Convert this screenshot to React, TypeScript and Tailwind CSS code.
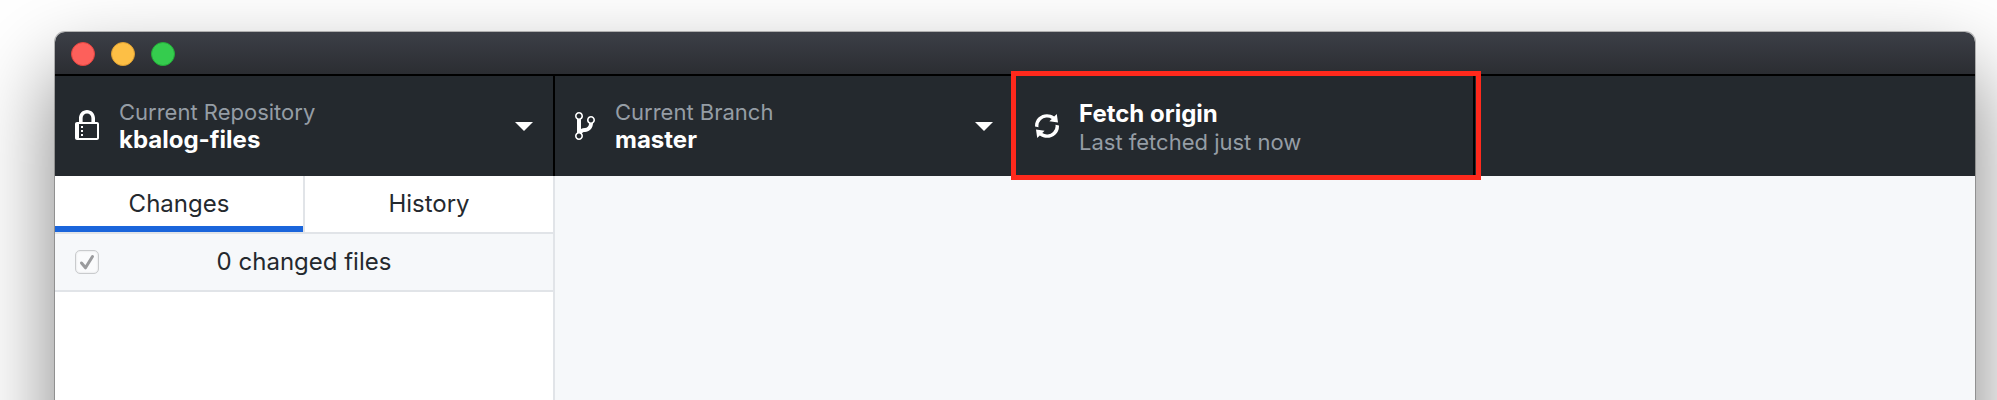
import type { ReactNode } from 'react';

type IconProps = { path: string; width: number };

const lockPath =
  'M4 13H3v-1h1v1zm8-6v7c0 .55-.45 1-1 1H1c-.55 0-1-.45-1-1V7c0-.55.45-1 1-1h1V4c0-2.2 1.8-4 4-4s4 1.8 4 4v2h1c.55 0 1 .45 1 1zM3.8 6h4.41V4c0-1.22-.98-2.2-2.2-2.2-1.22 0-2.2.98-2.2 2.2v2H3.8zM11 7H2v7h9V7zM4 8H3v1h1V8zm0 2H3v1h1v-1z';
const branchPath =
  'M10 5c0-1.11-.89-2-2-2a1.993 1.993 0 0 0-1 3.72v.3c-.02.52-.23.98-.63 1.38-.4.4-.86.61-1.38.63-.83.02-1.48.16-2 .45V4.72a1.993 1.993 0 0 0-1-3.72C.88 1 0 1.89 0 3a2 2 0 0 0 1 1.72v6.56c-.59.35-1 .99-1 1.72 0 1.11.89 2 2 2 1.11 0 2-.89 2-2 0-.53-.2-1-.53-1.36.09-.06.48-.41.59-.47.25-.11.56-.17.94-.17 1.05-.05 1.95-.45 2.75-1.25S8.95 7.77 9 6.73h-.02C9.59 6.37 10 5.73 10 5zM2 1.8c.66 0 1.2.55 1.2 1.2 0 .65-.55 1.2-1.2 1.2C1.35 4.2.8 3.65.8 3c0-.65.55-1.2 1.2-1.2zm0 12.41c-.66 0-1.2-.55-1.2-1.2 0-.65.55-1.2 1.2-1.2.65 0 1.2.55 1.2 1.2 0 .65-.55 1.2-1.2 1.2zm6-8c-.66 0-1.2-.55-1.2-1.2 0-.65.55-1.2 1.2-1.2.65 0 1.2.55 1.2 1.2 0 .65-.55 1.2-1.2 1.2z';
const syncPath =
  'M10.24 7.4a4.15 4.15 0 0 1-1.2 3.6 4.346 4.346 0 0 1-5.41.54L4.8 10.4.5 9.8l.6 4.2 1.31-1.26c2.36 1.74 5.7 1.57 7.84-.54a5.876 5.876 0 0 0 1.74-4.46l-1.75-.34zM2.96 5a4.346 4.346 0 0 1 5.41-.54L7.2 5.6l4.3.6-.6-4.2-1.31 1.26c-2.36-1.74-5.7-1.57-7.85.54C.5 5.03-.06 6.65.01 8.26l1.75.35A4.17 4.17 0 0 1 2.96 5z';

function Icon({ path, width }: IconProps) {
  return (
    <svg
      width={width * 2}
      height={32}
      viewBox={`0 0 ${width} 16`}
      fill="currentColor"
      fillRule="evenodd"
      className="shrink-0"
      aria-hidden="true"
    >
      <path d={path} />
    </svg>
  );
}

function Caret() {
  return (
    <svg width="18" height="9" viewBox="0 0 18 9" fill="currentColor" className="shrink-0" aria-hidden="true">
      <path d="M0 0h18L9 9z" />
    </svg>
  );
}

function ToolbarButton({ icon, caret, children }: { icon: ReactNode; caret?: boolean; children: ReactNode }) {
  return (
    <button
      type="button"
      className="flex h-full w-full items-center gap-5 border-r-2 border-black px-5 text-left text-white"
    >
      {icon}
      <span className="flex min-w-0 flex-1 flex-col whitespace-nowrap">{children}</span>
      {caret && <Caret />}
    </button>
  );
}

function Caption({ children }: { children: ReactNode }) {
  return <span className="text-[22px] leading-7 text-[#959da5]">{children}</span>;
}

function Title({ children }: { children: ReactNode }) {
  return <span className="text-[24px] leading-7 font-bold">{children}</span>;
}

function TitleBar() {
  return (
    <header className="flex h-11 shrink-0 items-center gap-4 border-b-2 border-black bg-linear-to-b from-[#3c3f47] to-[#2b2d32] px-4 pt-0.5">
      <button type="button" aria-label="Close" className="size-6 rounded-full border border-[#e2443f] bg-[#fd605b]" />
      <button type="button" aria-label="Minimize" className="size-6 rounded-full border border-[#dd9f32] bg-[#fdbf45]" />
      <button type="button" aria-label="Zoom" className="size-6 rounded-full border border-[#24ab38] bg-[#35cc4e]" />
    </header>
  );
}

export default function App() {
  return (
    <div className="flex h-screen flex-col overflow-hidden bg-white pt-8 pr-[22px] pl-[55px] font-['Inter','Liberation_Sans',sans-serif]">
      <div className="-mb-60 flex flex-1 flex-col rounded-t-[10px] shadow-[0_0_0_1px_rgba(0,0,0,0.25),0_40px_84px_rgba(0,0,0,0.5)]">
        <div className="flex flex-1 flex-col overflow-clip rounded-t-[10px] bg-white">
          <TitleBar />
          <nav aria-label="Toolbar" className="flex h-25 shrink-0 bg-[#24292e]">
            <div className="w-125">
              <ToolbarButton icon={<Icon path={lockPath} width={12} />} caret>
                <Caption>Current Repository</Caption>
                <Title>kbalog-files</Title>
              </ToolbarButton>
            </div>
            <div className="w-115">
              <ToolbarButton icon={<Icon path={branchPath} width={10} />} caret>
                <Caption>Current Branch</Caption>
                <Title>master</Title>
              </ToolbarButton>
            </div>
            <div className="relative w-115">
              <ToolbarButton icon={<Icon path={syncPath} width={12} />}>
                <span className="flex flex-col pt-1">
                  <Title>Fetch origin</Title>
                  <Caption>Last fetched just now</Caption>
                </span>
              </ToolbarButton>
              <div className="pointer-events-none absolute -top-[5px] -right-[6px] -bottom-1 -left-1 border-5 border-[#ff291c]" />
            </div>
          </nav>
          <div className="flex flex-1 text-2xl leading-8 text-[#24292e]">
            <aside className="flex w-125 shrink-0 flex-col border-r-2 border-[#e1e4e8]">
              <div role="tablist" className="flex h-[58px] border-b-2 border-[#e1e4e8]">
                <button
                  type="button"
                  role="tab"
                  aria-selected="true"
                  className="flex-1 border-b-6 border-[#1a65db] pt-1.5"
                >
                  Changes
                </button>
                <button
                  type="button"
                  role="tab"
                  aria-selected="false"
                  className="flex-1 border-l-2 border-[#e1e4e8]"
                >
                  History
                </button>
              </div>
              <div className="flex h-[58px] items-center border-b-2 border-[#e1e4e8] bg-[#f6f8fa] px-5">
                <input
                  id="include-all"
                  type="checkbox"
                  defaultChecked
                  disabled
                  className="size-6 shrink-0 appearance-none rounded-[5px] border border-[#c9cbcd] bg-[#fafbfc] shadow-[inset_0_0_2px_rgba(0,0,0,0.15)]"
                />
                <svg
                  width="24"
                  height="24"
                  viewBox="0 0 24 24"
                  fill="none"
                  stroke="#9a9b9d"
                  strokeWidth="3"
                  strokeLinecap="round"
                  strokeLinejoin="round"
                  className="pointer-events-none -ml-6 shrink-0"
                  aria-hidden="true"
                >
                  <path d="M6.500 13l4 4.800L17.500 6.500" />
                </svg>
                <label htmlFor="include-all" className="flex-1 pr-6 text-center">
                  0 changed files
                </label>
              </div>
            </aside>
            <main className="flex-1 bg-[#f6f8fa]" />
          </div>
        </div>
      </div>
    </div>
  );
}
